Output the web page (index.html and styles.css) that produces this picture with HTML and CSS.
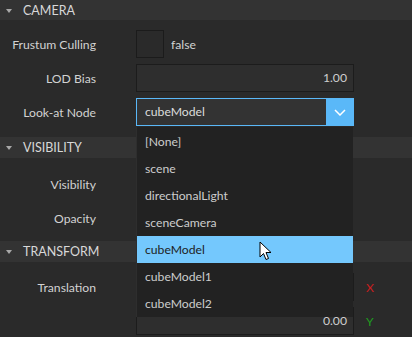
FILE: index.html
```html
<!DOCTYPE html>
<html lang="en">
  <head>
    <meta charset="UTF-8" />
    <meta name="viewport" content="width=device-width, initial-scale=1.0" />
    <title>Inspector</title>
    <link rel="stylesheet" href="styles.css">
  </head>
  <body>
    <div id="inspector">
      <div class="section section-camera">
        <div class="section-header"><span class="caret"></span>CAMERA</div>
        <div class="section-body">
          <div class="row">
            <label class="row-label">Frustum Culling</label>
            <div class="row-control">
              <span class="checkbox"></span>
              <span class="check-text">false</span>
            </div>
          </div>
          <div class="row">
            <label class="row-label">LOD Bias</label>
            <div class="row-control">
              <div class="number-input">1.00</div>
            </div>
          </div>
          <div class="row">
            <label class="row-label">Look-at Node</label>
            <div class="row-control">
              <div class="select open">
                <span class="select-value">cubeModel</span>
                <span class="select-button">
                  <svg width="12" height="7" viewBox="0 0 12 7"><path d="M1 1 L6 6 L11 1" fill="none" stroke="#fff" stroke-width="1.5"/></svg>
                </span>
                <ul class="select-list">
                  <li>[None]</li>
                  <li>scene</li>
                  <li>directionalLight</li>
                  <li>sceneCamera</li>
                  <li class="selected">cubeModel
                    <svg class="cursor" width="13" height="20" viewBox="0 0 13 20"><path d="M1 1 L1 16 L4.5 12.5 L7 18.5 L9.5 17.5 L7 11.5 L12 11.5 Z" fill="#fff" stroke="#000" stroke-width="1"/></svg>
                  </li>
                  <li>cubeModel1</li>
                  <li>cubeModel2</li>
                </ul>
              </div>
            </div>
          </div>
        </div>
      </div>

      <div class="section section-visibility">
        <div class="section-header"><span class="caret"></span>VISIBILITY</div>
        <div class="section-body">
          <div class="row">
            <label class="row-label">Visibility</label>
            <div class="row-control"></div>
          </div>
          <div class="row">
            <label class="row-label">Opacity</label>
            <div class="row-control"></div>
          </div>
        </div>
      </div>

      <div class="section section-transform">
        <div class="section-header"><span class="caret"></span>TRANSFORM</div>
        <div class="section-body">
          <div class="row">
            <label class="row-label">Translation</label>
            <div class="row-control">
              <div class="number-input">0.00</div>
              <span class="axis axis-x">X</span>
            </div>
          </div>
          <div class="row">
            <label class="row-label"></label>
            <div class="row-control">
              <div class="number-input">0.00</div>
              <span class="axis axis-y">Y</span>
            </div>
          </div>
        </div>
      </div>
    </div>
  </body>
</html>
```

FILE: styles.css
```css
body {
  margin: 0;
  height: 100vh;
  overflow: hidden;
  font-family: Lato, "Noto Sans", sans-serif;
  font-size: 12.2px;
  color: #d2d2d2;
  background-color: #2a2a2a;
}

.section-header {
  height: 21px;
  display: flex;
  align-items: center;
  background-color: #333;
  color: #d8d8d8;
  font-size: 12.5px;
}

.section-camera .section-header {
  height: 20px;
}

.caret {
  width: 0;
  height: 0;
  margin: 1px 11px 0 6px;
  border-left: 3.5px solid transparent;
  border-right: 3.5px solid transparent;
  border-top: 4px solid #a8a8a8;
}

.section-body {
  display: flex;
  flex-direction: column;
  gap: 6px;
  padding: 10px 0;
}

.section-camera .section-body {
  padding: 10px 0 11px;
}

.section-visibility .section-body {
  padding: 12px 0 9px;
}

.section-transform .section-body {
  padding: 11px 0 10px;
}

.row {
  display: flex;
  align-items: center;
  height: 28px;
}

.row-label {
  width: 96px;
  text-align: right;
  flex-shrink: 0;
}

.row-control {
  display: flex;
  align-items: center;
  margin-left: 40px;
  height: 28px;
}

.checkbox {
  width: 26px;
  height: 26px;
  border: 1px solid #1b1b1b;
}

.check-text {
  margin-left: 7px;
}

.number-input {
  box-sizing: border-box;
  width: 218px;
  height: 28px;
  line-height: 26px;
  padding-right: 6px;
  text-align: right;
  border: 1px solid #1c1c1c;
  background-color: #2e2e2e;
  color: #cfcfcf;
}

.axis {
  margin-left: 12px;
}

.axis-x {
  color: #c81e1e;
}

.axis-y {
  color: #1f9d1f;
}

.select {
  position: relative;
  box-sizing: border-box;
  width: 218px;
  height: 28px;
  display: flex;
  border: 1px solid #5ab8f8;
  background-color: #333;
}

.select-value {
  flex-grow: 1;
  padding-left: 8px;
  line-height: 26px;
  color: #dcdcdc;
}

.select-button {
  width: 27px;
  display: flex;
  align-items: center;
  justify-content: center;
  background-color: #5ab8f8;
}

.select-list {
  position: absolute;
  top: 28px;
  left: -1px;
  width: 217px;
  margin: 0;
  padding: 1px 0 0 0;
  list-style: none;
  background-color: #222;
  border-left: 1px solid #2e2e2e;
  box-sizing: border-box;
  z-index: 5;
}

.select-list li {
  position: relative;
  height: 27px;
  line-height: 27px;
  padding-left: 8px;
  color: #cdcdcd;
}

.select-list li.selected {
  background-color: #74c8fd;
  color: #1e1e1e;
}

.cursor {
  position: absolute;
  left: 122px;
  top: 5px;
}
```
